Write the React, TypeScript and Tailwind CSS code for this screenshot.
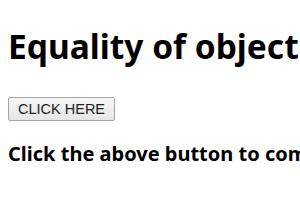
import React from 'react';

const App: React.FC = () => {
  return (
    <div className="w-[300px] h-[210px] overflow-hidden bg-white px-2 pt-[24px] font-['Noto_Sans',sans-serif] text-black">
      <h1 className="whitespace-nowrap text-[33.5px] font-bold leading-[44px]">
        Equality of objects with Object.is() method
      </h1>

      <button
        type="button"
        className="mt-[29px] h-[24px] rounded-[2px] border border-[#a6a6a6] bg-gradient-to-b from-[#f6f6f6] to-[#e6e6e6] px-[9px] font-['Liberation_Sans',Arial,sans-serif] text-[14.5px] leading-none text-[#222]"
      >
        CLICK HERE
      </button>

      <h3 className="mt-[20px] whitespace-nowrap text-[20px] font-bold leading-[26px]">
        Click the above button to compare the objects
      </h3>
    </div>
  );
};

export default App;
